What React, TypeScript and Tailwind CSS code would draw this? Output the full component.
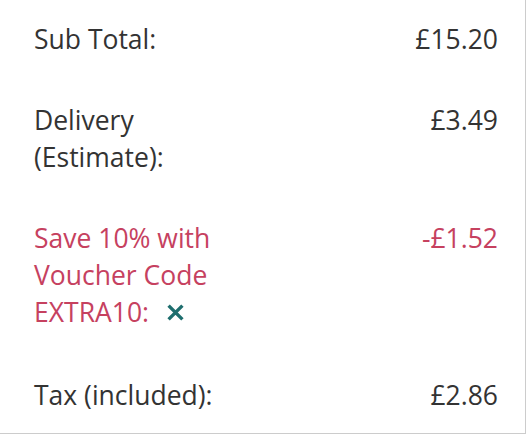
const rows = [
  { label: "Sub Total:", value: "£15.20" },
  { label: "Delivery (Estimate):", value: "£3.49" },
];

function Row({
  label,
  value,
  red,
  children,
}: {
  label: string;
  value: string;
  red?: boolean;
  children?: React.ReactNode;
}) {
  return (
    <div className={`flex justify-between ${red ? "text-[#c6415f]" : "text-[#333333]"}`}>
      <div className="w-[205px]">
        {label}
        {children}
      </div>
      <div className="text-right">{value}</div>
    </div>
  );
}

export default function App() {
  return (
    <div className="w-[527px] h-[436px] bg-white">
      <div
        className="h-[434px] w-[526px] border-r border-b border-[#cccccc] pl-[34px] pr-[27px] pt-[21px] flex flex-col gap-[44px] text-[26.5px] leading-[37px]"
        style={{ fontFamily: "'Open Sans', 'Liberation Sans', sans-serif" }}
      >
        {rows.map((r) => (
          <Row key={r.label} label={r.label} value={r.value} />
        ))}
        <Row label="Save 10% with Voucher Code EXTRA10:" value="-£1.52" red>
          <button className="ml-[18px] align-middle text-[#1e6e6e]">
            <svg width="17" height="17" viewBox="0 0 16 16" className="inline -mt-1 -translate-y-[3px]">
              <path d="M1.5 1.5 L14.5 14.5 M14.5 1.5 L1.5 14.5" stroke="currentColor" strokeWidth="3.2" />
            </svg>
          </button>
        </Row>
        <Row label="Tax (included):" value="£2.86" />
      </div>
    </div>
  );
}
